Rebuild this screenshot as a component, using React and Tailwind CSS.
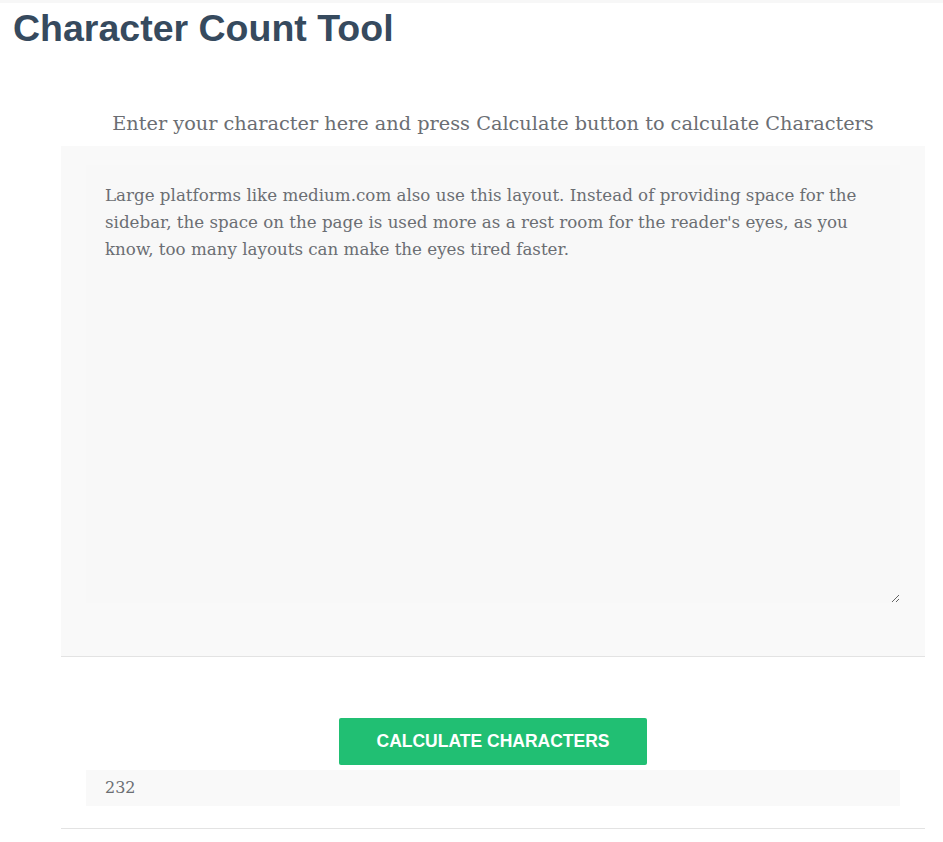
import React from "react";

export default function App() {
  const text =
    "Large platforms like medium.com also use this layout. Instead of providing space for the sidebar, the space on the page is used more as a rest room for the reader's eyes, as you know, too many layouts can make the eyes tired faster.";
  return (
    <div className="min-h-screen bg-white border-t-[3px] border-[#f7f7f7]">
      <h1
        className="pl-[13px] pt-[3px] text-[37.5px] leading-[44px] font-bold text-[#364a5e]"
        style={{ fontFamily: '"Liberation Sans", Arial, sans-serif' }}
      >
        Character Count Tool
      </h1>
      <div className="ml-[61px] w-[864px]">
        <p
          className="mt-[60px] text-center text-[19.3px] leading-[28px] text-[#6b6e73]"
          style={{ fontFamily: '"DejaVu Serif", "Liberation Serif", serif' }}
        >
          Enter your character here and press Calculate button to calculate Characters
        </p>
        <div className="mt-[8px] bg-[#f9f9f9] border-b border-[#e3e3e3] px-[25px] pt-[19px] pb-[53px]">
          <textarea
            defaultValue={text}
            className="block w-full h-[438px] bg-[#f8f8f8] px-[19px] pt-[17px] text-[16.7px] leading-[27px] text-[#6b6e73] outline-none resize-y"
            style={{ fontFamily: '"DejaVu Serif", "Liberation Serif", serif' }}
          />
        </div>
        <div className="flex justify-center mt-[61px]">
          <button
            className="w-[308px] h-[47px] bg-[#21bf73] rounded-[2px] text-white font-bold text-[17.5px] uppercase"
            style={{ fontFamily: '"Liberation Sans", Arial, sans-serif' }}
          >
            Calculate Characters
          </button>
        </div>
        <div
          className="mx-[25px] mt-[5px] h-[36px] bg-[#f9f9f9] px-[19px] flex items-center text-[16px] text-[#6b6e73]"
          style={{ fontFamily: '"DejaVu Serif", "Liberation Serif", serif' }}
        >
          232
        </div>
        <div className="mt-[22px] border-b border-[#e3e3e3]" />
      </div>
    </div>
  );
}
